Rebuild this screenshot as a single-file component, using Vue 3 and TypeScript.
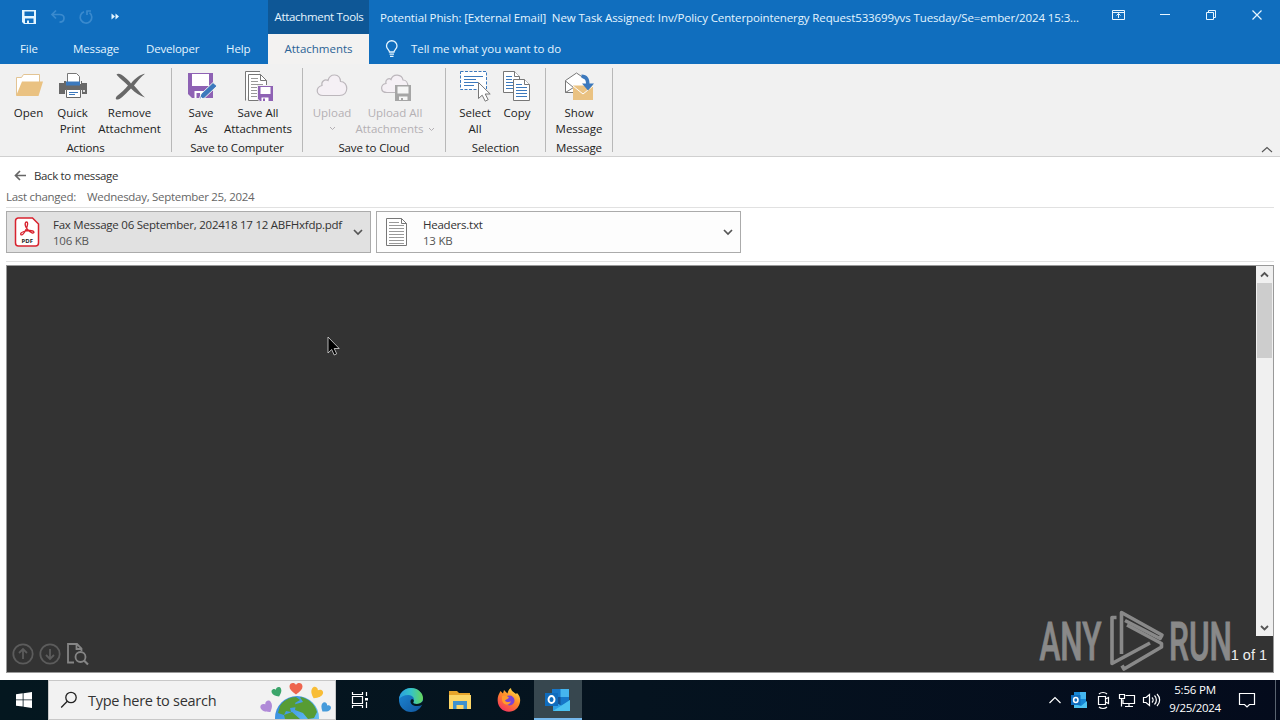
<script setup lang="ts">
interface Attachment {
  name: string
  size: string
  kind: 'pdf' | 'txt'
  selected: boolean
}

const tabs = [
  { label: 'File', cls: 'file' },
  { label: 'Message', cls: 'message' },
  { label: 'Developer', cls: 'developer' },
  { label: 'Help', cls: 'help' },
]

const subject =
  'Potential Phish: [External Email]\u00a0 New Task Assigned: Inv/Policy Centerpointenergy Request533699yvs Tuesday/Se=ember/2024 15:3...'

const attachments: Attachment[] = [
  { name: 'Fax Message 06 September, 202418 17 12 ABFHxfdp.pdf', size: '106 KB', kind: 'pdf', selected: true },
  { name: 'Headers.txt', size: '13 KB', kind: 'txt', selected: false },
]
</script>

<template>
  <div class="screen">
    <header class="titlebar">
      <div class="left">
        <div class="quick">
          <svg width="130" height="34" viewBox="0 0 130 34">
            <path d="M22 10h14v14H24l-2-2z" fill="#e4f5ff" />
            <path d="M24.500 11.500h9.500v4.500h-9.500zM25 18.500h8.500v4.500H25z" fill="#106ebe" />
            <path d="M27 20.500h2v2.500h-2z" fill="#e4f5ff" />
            <g fill="none" stroke="#3a8ace" stroke-width="1.700">
              <path d="M56 10.500l-4 4 4 4M52.500 14.500h7c3 0 4.500 1.500 4.500 3.700 0 2.500-1.700 3.800-4.500 4" />
              <path d="M84 11.800a5.800 5.800 0 1 0 5.500 .8M86.500 11h4.500M87 10.500v4.500" />
            </g>
            <path d="M111.500 13.500l3.500 3-3.500 3zM115.500 13.500l3.500 3-3.500 3z" fill="#e4f5ff" />
          </svg>
        </div>
        <nav class="tabs">
          <span v-for="t in tabs" :key="t.label" :class="t.cls">{{ t.label }}</span>
        </nav>
      </div>
      <div class="context">
        <div class="tools">Attachment Tools</div>
        <div class="active-tab">Attachments</div>
      </div>
      <div class="right">
        <div class="subject-row">
          <span class="subject">{{ subject }}</span>
          <svg class="winctl" width="180" height="30" viewBox="1100 0 180 30" fill="none" stroke="#e8f6ff">
            <path d="M1112.500 10.500h12v9h-12zM1112.500 12.500h12M1118.500 18v-4.500M1116.500 15.500l2-2 2 2" />
            <path d="M1160 14.500h10" />
            <path d="M1206.500 12.500h7v7h-7zM1208.500 12v-1.500h7v7h-1.500" />
            <path d="M1252.500 10.500l9 9M1261.500 10.500l-9 9" stroke-width="1.200" />
          </svg>
        </div>
        <div class="tell">
          <svg width="14" height="18" viewBox="0 0 14 18" fill="none" stroke="#e4f5ff" stroke-width="1.300">
            <path d="M4.500 12c0-2-3-3-3-6a5 5 0 0 1 10.500 0c0 3-3 4-3 6zM4.500 14.200h4.500M5 16.400h3.500" />
          </svg>
          <span>Tell me what you want to do</span>
        </div>
      </div>
    </header>

    <section class="ribbon">
      <div class="group g1">
        <div class="buttons">
          <button class="b-open">
            <svg width="32" height="32" viewBox="0 0 32 32">
              <path d="M3.500 25V7.500h5l2-3h16V12" fill="#fff" stroke="#e3c493" />
              <path d="M3 26L9 11.500h21L25.500 26z" fill="#eac282" />
            </svg>
            <span>Open</span>
          </button>
          <button class="b-print">
            <svg width="32" height="32" viewBox="0 0 32 32">
              <path d="M10.500 3.500h9l3 3V13h-12z" fill="#fff" stroke="#777" />
              <path d="M2 13h5v-2h2v3h15v-3h1v2h5v11h-5v-4H8v4H2z" fill="#686868" />
              <path d="M9 11.500h14v4H9z" fill="#3c79bd" />
              <path d="M9.500 19.500h14v8h-14z" fill="#fff" stroke="#686868" />
              <path d="M12 22.500h9M12 24.500h6" stroke="#3c79bd" />
              <circle cx="27" cy="21" r="1" fill="#fff" />
            </svg>
            <span>Quick<br />Print</span>
          </button>
          <button class="b-remove">
            <svg width="32" height="32" viewBox="0 0 32 32">
              <path d="M2.500 4.500C6 1.500 14 10 17 13.500 21 8.500 27 4 31 3.800c-4 3-8 8-11 11.700 4 4.500 7.500 9 11 12-5-1.500-10-5-14-9C12 23 8 28.500 4 29.500c-3 .5-2.500-2-1-3.500 4-3 8-7 11-10.500C11 12 4 7 2.500 4.500z" fill="#686868" />
            </svg>
            <span>Remove<br />Attachment</span>
          </button>
        </div>
        <div class="caption">Actions</div>
      </div>

      <div class="group g2">
        <div class="buttons">
          <button class="b-saveas">
            <svg width="32" height="32" viewBox="0 0 32 32">
              <path d="M3 3h25v25H7l-4-4z" fill="#8e62b4" />
              <path d="M7 4h17v12H7zM9.500 21H20v7H9.500z" fill="#fff" />
              <path d="M11.500 23h3.500v5h-3.500z" fill="#8e62b4" />
              <path d="M14 30l2-6L28 12.500l4 3.500-12.500 12z" fill="#3c79bd" stroke="#f1f1f1" />
              <path d="M15 29.500l3-.8-2-2z" fill="#fff" />
            </svg>
            <span>Save<br />As</span>
          </button>
          <button class="b-saveall">
            <svg width="32" height="32" viewBox="0 0 32 32">
              <path d="M3.500 30.500V1.500H18M6.500 30.500v-26h12l6 6v20z" fill="#fff" stroke="#777" />
              <path d="M18.500 4.500v6h6" fill="none" stroke="#777" />
              <path d="M9 8.500h7M9 11.500h7M9 14.500h12M9 17.500h8M9 20.500h6M9 23.500h6M9 26.500h6" stroke="#999" />
              <path d="M15.500 15.500h16v16H18l-2.500-2.500z" fill="#8e62b4" stroke="#f1f1f1" />
              <path d="M18.500 17h10v7h-10zM19.500 27.500h7V31h-7z" fill="#fff" />
              <path d="M21 28.500h2V31h-2z" fill="#8e62b4" />
            </svg>
            <span>Save All<br />Attachments</span>
          </button>
        </div>
        <div class="caption">Save to Computer</div>
      </div>

      <div class="group g3">
        <div class="buttons disabled">
          <button class="b-upload">
            <svg width="32" height="32" viewBox="0 0 32 32" fill="#f5f0f5" stroke="#bcb7bc" stroke-width="1.200">
              <path d="M7 25.500c-7 0-8-8-1-10-1-4 3-7 6-5C14 3 24 3 24.500 11.500c8 0 9 14-1 14z" />
            </svg>
            <span>Upload</span>
            <svg class="mini" width="7" height="5" viewBox="0 0 7 5"><path d="M1 1l2.500 2.500L6 1" /></svg>
          </button>
          <button class="b-uploadall">
            <svg class="shifted" width="32" height="32" viewBox="0 0 32 32">
              <path d="M6 22.500c-7 0-7-8-1-9-1-4 3-6 5-4C12 3 21 4 22 10c6 0 7 12 0 12.500z" fill="#f5f0f5" stroke="#bcb7bc" stroke-width="1.200" />
              <path d="M14 15h16v16H14z" fill="#a5a5a5" />
              <path d="M16.500 16.500h11v7h-11zM18 26.500h8.500V30H18z" fill="#f5f5f5" />
              <path d="M20 28h2v2h-2z" fill="#a5a5a5" />
            </svg>
            <span>Upload All</span>
            <span class="with-arrow">Attachments <svg class="mini" width="7" height="5" viewBox="0 0 7 5"><path d="M1 1l2.500 2.500L6 1" /></svg></span>
          </button>
        </div>
        <div class="caption">Save to Cloud</div>
      </div>

      <div class="group g4">
        <div class="buttons">
          <button class="b-select">
            <svg width="32" height="32" viewBox="0 0 32 32">
              <path d="M1.500 1.500h26v18h-26z" fill="#fff" stroke="#3c79bd" stroke-dasharray="3 1.500" />
              <path d="M5 6.500h19M5 9.500h12M5 12.500h14M5 15.500h10" stroke="#3c79bd" />
              <path d="M19.500 12.500v16l3.700-3.300 3 6 3-1.500-3-5.700h5z" fill="#fff" stroke="#777" />
            </svg>
            <span>Select<br />All</span>
          </button>
          <button class="b-copy">
            <svg width="32" height="32" viewBox="0 0 32 32" fill="#fff" stroke="#777">
              <path d="M2.500 1.500h11l5 5v16h-16z" /><path d="M13.500 1.500v5h5" />
              <path d="M5 6.500h6M5 9.500h6M5 12.500h7M5 15.500h7M5 18.500h7" stroke="#3c79bd" />
              <path d="M12.500 9.500h11l5 5v16h-16z" /><path d="M23.500 9.500v5h5" />
              <path d="M15 14.500h6M15 17.500h11M15 20.500h11M15 23.500h11M15 26.500h11" stroke="#3c79bd" />
            </svg>
            <span>Copy</span>
          </button>
        </div>
        <div class="caption">Selection</div>
      </div>

      <div class="group g5">
        <div class="buttons">
          <button class="b-show">
            <svg width="32" height="32" viewBox="0 0 32 32">
              <path d="M2.500 22.500v-12l11-7.500 11 7.500v12z" fill="#fff" stroke="#777" />
              <path d="M2.500 11l8 6.500-8 5" fill="none" stroke="#777" />
              <path d="M10 15.500h20V30H10z" fill="#eac282" />
              <path d="M10 16l10 8 10-8" fill="none" stroke="#fff" />
              <path d="M18.500 4.500c6 0 8 4 8 9h4.500L25 20.500l-6-7h4c0-3-1-5-4.500-5.500z" fill="#3c79bd" />
            </svg>
            <span>Show<br />Message</span>
          </button>
        </div>
        <div class="caption">Message</div>
      </div>
      <svg class="collapse" width="12" height="7" viewBox="0 0 12 7"><path d="M1 6l5-4.500L11 6" /></svg>
    </section>

    <section class="info">
      <div class="back">
        <svg width="13" height="11" viewBox="0 0 13 11"><path d="M12 5.500H2M6 1L1.500 5.500 6 10" fill="none" stroke="#666" stroke-width="1.700" /></svg>
        <span>Back to message</span>
      </div>
      <div class="changed"><span class="k">Last changed:</span><span class="v">Wednesday, September 25, 2024</span></div>
      <div class="cards">
        <div v-for="a in attachments" :key="a.name" class="card" :class="{ selected: a.selected }">
          <svg v-if="a.kind === 'pdf'" width="26" height="32" viewBox="0 0 26 32">
            <path d="M4 2h14.500l6 6v19a3 3 0 0 1-3 3H4.500a3 3 0 0 1-3-3V5a3 3 0 0 1 2.500-3z" fill="#fff" stroke="#d8232f" stroke-width="1.500" />
            <path d="M12.500 6c2 0 1 4-.5 7.500C10.500 17 8 20 6.800 18.500c-1.300-2 5-4 9-4 5 0 5 3 2.500 2.500C15.500 16.500 10.500 11 11.200 7.500c.2-1 .6-1.500 1.300-1.500z" fill="none" stroke="#d8232f" stroke-width="1.300" />
            <text x="7.500" y="27" class="pdf-mark">PDF</text>
          </svg>
          <svg v-else width="26" height="32" viewBox="0 0 26 32">
            <path d="M2.500 2.500h15l5 5v22h-20z" fill="#fff" stroke="#777" />
            <path d="M17.500 2.500v5h5" fill="none" stroke="#777" />
            <path d="M5 6.500h10M5 9.500h15M5 12.500h15M5 15.500h15M5 18.500h15M5 21.500h15M5 24.500h15M5 27.500h15" stroke="#999" />
          </svg>
          <div class="meta"><span class="name">{{ a.name }}</span><span class="size">{{ a.size }}</span></div>
          <svg class="chev" width="10" height="7" viewBox="0 0 10 7"><path d="M1 1l4 4 4-4" /></svg>
        </div>
      </div>
    </section>

    <main class="viewer">
      <div class="canvas">
        <svg class="pager" width="84" height="28" viewBox="0 0 84 28" fill="none" stroke="#5c5c5c" stroke-width="1.800">
          <circle cx="16" cy="14" r="9.700" /><path d="M16 19V9M12 13l4-4 4 4" />
          <circle cx="43" cy="14" r="9.700" /><path d="M43 9v10M39 15l4 4 4-4" />
          <g stroke="#858585"><path d="M67 22.500h-6V4h9l4.500 4.500V11M69.500 4v5h5" /><circle cx="73.500" cy="17" r="5" /><path d="M77 20.500l4 4" stroke-width="2.200" /></g>
        </svg>
      </div>
      <div class="side">
        <div class="scrollbar">
          <svg width="17" height="17" viewBox="0 0 17 17"><path d="M5 10.500L8.500 7l3.500 3.500" /></svg>
          <div class="thumb"></div>
          <svg class="down" width="17" height="17" viewBox="0 0 17 17"><path d="M5 7L8.500 10.500 12 7" /></svg>
        </div>
      </div>
      <svg class="watermark" width="204" height="66" viewBox="1033 607 204 66">
        <text x="1039.500" y="659.500" textLength="62" lengthAdjust="spacingAndGlyphs">ANY</text>
        <text x="1169" y="659.500" textLength="63" lengthAdjust="spacingAndGlyphs">RUN</text>
        <g fill="none" stroke="#898989" stroke-width="3.600" stroke-linejoin="round">
          <path d="M1116.500 617.500h-4.500V663.500l38-20.500" />
          <path d="M1121.500 654V612.500l40.500 22.500-2 3.500-35-18" />
          <path d="M1127 625l34.500 18.500v3.500L1124 669l-2-3.500" />
        </g>
      </svg>
      <span class="count">1 of 1</span>
      <svg class="cursor" width="14" height="21" viewBox="0 0 14 21"><path d="M1 1v16l3.700-3.500 2.500 5.500 2.500-1.200-2.500-5.300h5z" fill="#000" stroke="#ddd" stroke-width=".8" /></svg>
    </main>

    <footer class="taskbar">
      <div class="start">
        <svg width="16" height="16" viewBox="0 0 16 16" fill="#fff"><path d="M0 2.300L6.700 1.300v6.200H0zM7.500 1.200L16 0v7.500H7.500zM0 8.300h6.700v6.300L0 13.700zM7.500 8.300H16V16l-8.500-1.200z" /></svg>
      </div>
      <div class="search">
        <svg width="18" height="18" viewBox="0 0 18 18" fill="none" stroke="#222" stroke-width="1.300"><circle cx="11" cy="6.500" r="5.200" /><path d="M7.300 10.200L1.200 16.500" /></svg>
        <span>Type here to search</span>
        <svg class="earth" width="76" height="38" viewBox="259 681 76 38">
          <defs>
            <linearGradient id="sea" x2="1" y2="1"><stop stop-color="#2c80d8" /><stop offset=".6" stop-color="#5ab3ee" /><stop offset="1" stop-color="#7fd0f5" /></linearGradient>
          </defs>
          <circle cx="297" cy="718" r="22" fill="url(#sea)" />
          <path d="M280 706c3-5 9-9 16-9l4 3-5 3 2 4-7 1 1 4-5-1-2 4-6-2zM300 697c8 1 15 7 17 15l-3 6-6 1-5-6-8-3 1-6 7-2zM284 715l8-3 8 7h-15z" fill="#579c34" />
          <path d="M296 694.500c-4.500-3-6.500-5.500-6.500-8 0-4 5-4.500 6.500-1.500 1.500-3 6.500-2.500 6.500 1.500 0 2.500-2 5-6.500 8z" fill="#ee654e" />
          <path d="M0 5C-3.500 2.500-5 1-5-1.500-5-4.500-1.200-5 0-2.500 1.200-5 5-4.500 5-1.500 5 1 3.500 2.500 0 5z" fill="#3ca56b" transform="translate(277 692) rotate(-25)" />
          <path d="M0 6C-4.500 3-6 1-6-2-6-5.500-1.500-6 0-3 1.500-6 6-5.500 6-2 6 1 4.500 3 0 6z" fill="#f8bd36" transform="translate(316.500 693) rotate(28)" />
          <path d="M0 6C-4.500 3-6 1-6-2-6-5.500-1.500-6 0-3 1.500-6 6-5.500 6-2 6 1 4.500 3 0 6z" fill="#b08ad8" transform="translate(267 707) rotate(-35)" />
          <path d="M0 5C-3.500 2.500-5 1-5-1.500-5-4.500-1.200-5 0-2.500 1.200-5 5-4.500 5-1.500 5 1 3.500 2.500 0 5z" fill="#459bdb" transform="translate(325.500 707.500) rotate(38)" />
        </svg>
      </div>
      <div class="app">
        <svg width="18" height="18" viewBox="0 0 18 18" fill="none" stroke="#fff" stroke-width="1.200"><path d="M1.500 1v2.500h10V1M1.500 17v-2.500h10V17M1.500 5.500h10v7h-10zM15.500 1v4M15.500 11v6" /><path d="M14 7h3v2.500h-3z" fill="#fff" stroke="none" /></svg>
      </div>
      <div class="app edge">
        <svg width="24" height="24" viewBox="0 0 24 24">
          <defs>
            <linearGradient id="eg" x1="0" x2="1"><stop stop-color="#2a9de0" /><stop offset=".5" stop-color="#35c3c8" /><stop offset="1" stop-color="#67d75a" /></linearGradient>
            <linearGradient id="eb" x2="1" y2="1"><stop stop-color="#1c8ad8" /><stop offset="1" stop-color="#11559d" /></linearGradient>
          </defs>
          <circle cx="12" cy="12" r="12" fill="url(#eb)" />
          <path d="M0 11C1 4 6 0 12 0c7 0 12 5 12 10 0 4-3 6-6.500 6-3 0-4-1-3-2.500C16 11 14 7 9.500 7 5 7 1.500 9 0 11z" fill="url(#eg)" />
          <path d="M24 16.500c-2 1-4 1.500-6 1.500-4 0-6.500-2-6.500-4.500 0-1.200.6-2 1.500-2.500 1.800.6 2.300 1.800 1.500 3-.9 1.300.5 2 3 2 2.700 0 5-1 6.500-3z" fill="#04171f" />
        </svg>
      </div>
      <div class="app files">
        <svg width="22" height="20" viewBox="0 0 22 20"><path d="M0 1h8l2 2h11v5H0z" fill="#e7a52b" /><path d="M0 5h22v14H0z" fill="#fcd667" /><path d="M4 11h14v8h-3.500v-4h-7v4H4z" fill="#3d91cf" /></svg>
      </div>
      <div class="app fox">
        <svg width="24" height="24" viewBox="0 0 24 24">
          <defs><linearGradient id="ff" x1=".8" y1="0" x2=".2" y2="1"><stop stop-color="#ffe24a" /><stop offset=".45" stop-color="#ff8a28" /><stop offset="1" stop-color="#f42d63" /></linearGradient></defs>
          <path d="M2 6l1.500-3L6 5.500 7 2l3.500 3.500C11 2 13 .5 14 0c0 3 3 4 5 6l1-1c3 3 3.500 6 3 9-1 6-5.500 9.700-11 9.700C5.500 23.700 1 19 .7 13 .5 10 1 8 2 6z" fill="url(#ff)" />
          <circle cx="12.500" cy="12.500" r="5" fill="#7a43d5" />
          <path d="M5 8c3-1 5 0 7 1.500-1 2-3 1.500-4 3 1 2 5 2 6 .5-1 5-8 5-9-1z" fill="#ff9b2c" />
        </svg>
      </div>
      <div class="app outlook">
        <svg width="26" height="24" viewBox="0 0 26 24">
          <path d="M7 1h17v17H7z" fill="#1677c9" /><path d="M15.500 1H24v8h-8.500z" fill="#45b5ee" /><path d="M7 9h8.500v8H7z" fill="#155293" />
          <path d="M8 13l9 5 8-6v11H8z" fill="#2a9ee5" /><path d="M8 23l17-11v11z" fill="#4cc2f1" />
          <path d="M0 5h13v13H0z" fill="#0f6cbd" /><ellipse cx="6.500" cy="11.500" rx="3" ry="3.500" fill="none" stroke="#fff" stroke-width="1.900" />
        </svg>
      </div>
      <svg class="tray" width="120" height="24" viewBox="1045 688 120 24" fill="none" stroke="#fff" stroke-width="1.200">
        <path d="M1049.500 703l5.500-5.500 5.500 5.500" />
        <g stroke="none"><path d="M1074 692h12v16h-12z" fill="#1687d5" /><path d="M1080 692h6v7h-6z" fill="#44b6ef" /><path d="M1074 704l7 2 6-5v7h-13z" fill="#4cc2f1" /><path d="M1071 695h9.500v10h-9.500z" fill="#0f6cbd" /></g>
        <ellipse cx="1075.800" cy="700" rx="2.200" ry="2.500" stroke-width="1.500" />
        <path d="M1098.500 696.500h7v8h-7zM1105.500 699l3-1.500v6l-3-1.500M1099 694c2-2 6-2 8 0M1099 707c2 2 6 2 8 0" />
        <path d="M1125.500 695.500h9v8h-11.500v-4M1129 703.500v3M1125 706.500h8M1119.500 694.500h5v4h-5zM1121.500 698.500v8" />
        <path d="M1143.500 697.500h2.500l3.500-3v11l-3.500-3h-2.500zM1152 697.500c1.500 1.500 1.500 3.500 0 5M1154.500 695.500c2.500 2.500 2.500 6.500 0 9M1157 694c3.500 3.500 3.500 8.500 0 12" />
      </svg>
      <div class="clock"><span>5:56 PM</span><span class="date">9/25/2024</span></div>
      <svg class="notif" width="18" height="17" viewBox="0 0 18 17" fill="none" stroke="#fff" stroke-width="1.200"><path d="M1.500 1.500h15v11h-5L9 15l-2.500-2.500h-5z" /></svg>
      <div class="peek"></div>
    </footer>
  </div>
</template>

<style>
html, body { margin: 0; overflow: hidden; }
</style>

<style scoped>
.screen { width: 1280px; height: 720px; display: flex; flex-direction: column; background: #fff; font-family: "Open Sans", "Noto Sans", sans-serif; font-size: 11.5px; color: #333; white-space: nowrap; overflow: hidden; }
svg { display: block; flex: none; }
.titlebar { height: 64px; display: flex; background: #106ebe; color: #e4f5ff; }
.left { width: 268px; }
.quick { height: 34px; }
.tabs { height: 30px; display: flex; align-items: center; padding-left: 20px; line-height: 30px; letter-spacing: -.1px; }
.tabs .file { width: 53px; }
.tabs .message { width: 73px; }
.tabs .developer { width: 80px; letter-spacing: -.2px; }
.context { width: 101px; text-align: center; }
.tools { height: 34px; line-height: 33px; background: #0e5796; letter-spacing: -.33px; padding-left: 1px; }
.active-tab { height: 30px; line-height: 30px; background: #f3f2f1; color: #2b6295; }
.right { flex: 1; }
.subject-row { height: 34px; display: flex; justify-content: space-between; padding-left: 11px; }
.subject { line-height: 35px; letter-spacing: -.115px; }
.tell { height: 29px; display: flex; align-items: center; padding-left: 16px; gap: 12px; letter-spacing: -.04px; }
.ribbon { height: 92px; display: flex; background: #f1f1f1; border-bottom: 1px solid #d0d0d0; color: #222; }
.group { box-sizing: border-box; height: 84px; margin-top: 4px; border-right: 1px solid #b8b8b8; display: flex; flex-direction: column; justify-content: space-between; }
.g1 { width: 172px; }
.g2 { width: 131px; }
.g3 { width: 143px; }
.g4 { width: 100px; }
.g5 { width: 67px; }
.buttons { display: flex; padding-left: 8px; }
.g3 .buttons { padding-left: 6px; }
.g4 .buttons { padding-left: 9px; }
.g5 .buttons { padding-left: 7px; }
button { border: 0; background: none; padding: 2px 0 0; font: inherit; color: inherit; display: flex; flex-direction: column; align-items: center; line-height: 16px; }
button > span { margin-top: 3px; }
button > span + span { margin-top: 0; }
.b-open { width: 41px; }
.b-print { width: 47px; }
.b-remove { width: 67px; }
.b-saveas { width: 42px; }
.b-saveall { width: 72px; }
.b-upload { width: 46px; }
.b-uploadall { width: 80px; }
.b-select { width: 40px; }
.b-copy { width: 44px; }
.b-show { width: 52px; }
.shifted { margin-left: 4px; }
.disabled { color: #b4b0b4; }
.mini { fill: none; stroke: #b4b0b4; }
.b-upload .mini { margin-top: 5px; }
.with-arrow { display: flex; align-items: center; gap: 4px; }
.caption { text-align: center; height: 13px; line-height: 18px; letter-spacing: -.15px; }
.collapse { margin: 82px 7px 0 auto; fill: none; stroke: #555; stroke-width: 1.1; }
.info { height: 108px; display: flex; flex-direction: column; }
.back { height: 30px; padding-left: 14px; margin-top: 3px; margin-bottom: 1px; display: flex; align-items: center; gap: 7px; letter-spacing: -.37px; }
.changed { height: 16px; line-height: 12px; padding-left: 6px; color: #666; display: flex; gap: 11px; letter-spacing: -.29px; }
.cards { height: 50px; margin: 0 6px; border-top: 1px solid #e1e1e1; border-bottom: 1px solid #e1e1e1; padding-top: 3px; display: flex; gap: 5px; }
.card { box-sizing: border-box; width: 365px; height: 42px; border: 1px solid #ababab; background: #fdfdfd; display: flex; align-items: center; padding: 0 7px; }
.card.selected { background: #e1e1e1; }
.meta { flex: 1; padding: 2px 0 0 13px; display: flex; flex-direction: column; line-height: 16px; letter-spacing: -.24px; }
.size { color: #555; }
.chev { fill: none; stroke: #555; stroke-width: 1.7; }
.pdf-mark { font: bold 6px "Open Sans", sans-serif; fill: #222; }
.viewer { position: relative; box-sizing: border-box; height: 408px; margin: 0 6px; background: #333; border: 1px solid #999; display: flex; }
.canvas { flex: 1; display: flex; align-items: flex-end; }
.pager { margin-bottom: 4px; }
.side { width: 17px; }
.scrollbar { height: 370px; background: #f0f0f0; display: flex; flex-direction: column; }
.scrollbar svg { fill: none; stroke: #555; stroke-width: 1.8; }
.thumb { height: 75px; margin: 0 1px; background: #cdcdcd; }
.down { margin-top: auto; }
.watermark { position: absolute; left: 1026px; top: 341px; overflow: visible; }
.watermark text { font: 500 53px Roboto, sans-serif; fill: #898989; stroke: #898989; stroke-width: .9px; }
.count { position: absolute; right: 6px; top: 379px; font-family: "Liberation Sans", Arial, sans-serif; font-size: 14.5px; line-height: 20px; color: #eee; }
.cursor { position: absolute; left: 320px; top: 70px; }
.taskbar { height: 40px; margin-top: 7px; background: linear-gradient(90deg, #04171f, #05131f 50%, #040b1c); display: flex; align-items: center; color: #fff; }
.start { width: 48px; display: flex; justify-content: center; }
.search { box-sizing: border-box; width: 288px; height: 40px; background: #f2f2f2; border: 1px solid #c8c8c8; display: flex; align-items: center; padding-left: 11px; color: #333; font-size: 14.5px; letter-spacing: -.27px; }
.search span { margin-left: 10px; }
.earth { margin-left: auto; }
.app { width: 48px; height: 40px; display: flex; align-items: center; justify-content: center; box-sizing: border-box; }
.edge, .files, .fox { width: 49px; }
.edge { padding-left: 5px; }
.files { padding-left: 4px; }
.fox { padding-left: 5px; }
.outlook { background: #37474f; border-bottom: 2px solid #76b9ed; margin-left: 3px; padding-top: 2px; }
.tray { margin-left: auto; }
.clock { width: 60px; display: flex; flex-direction: column; align-items: center; line-height: 18px; padding-bottom: 2px; letter-spacing: -.2px; }
.date { letter-spacing: -.35px; }
.notif { margin-left: 13px; margin-right: 19px; }
.peek { width: 4px; height: 40px; border-left: 1px solid #5a6470; }
</style>
